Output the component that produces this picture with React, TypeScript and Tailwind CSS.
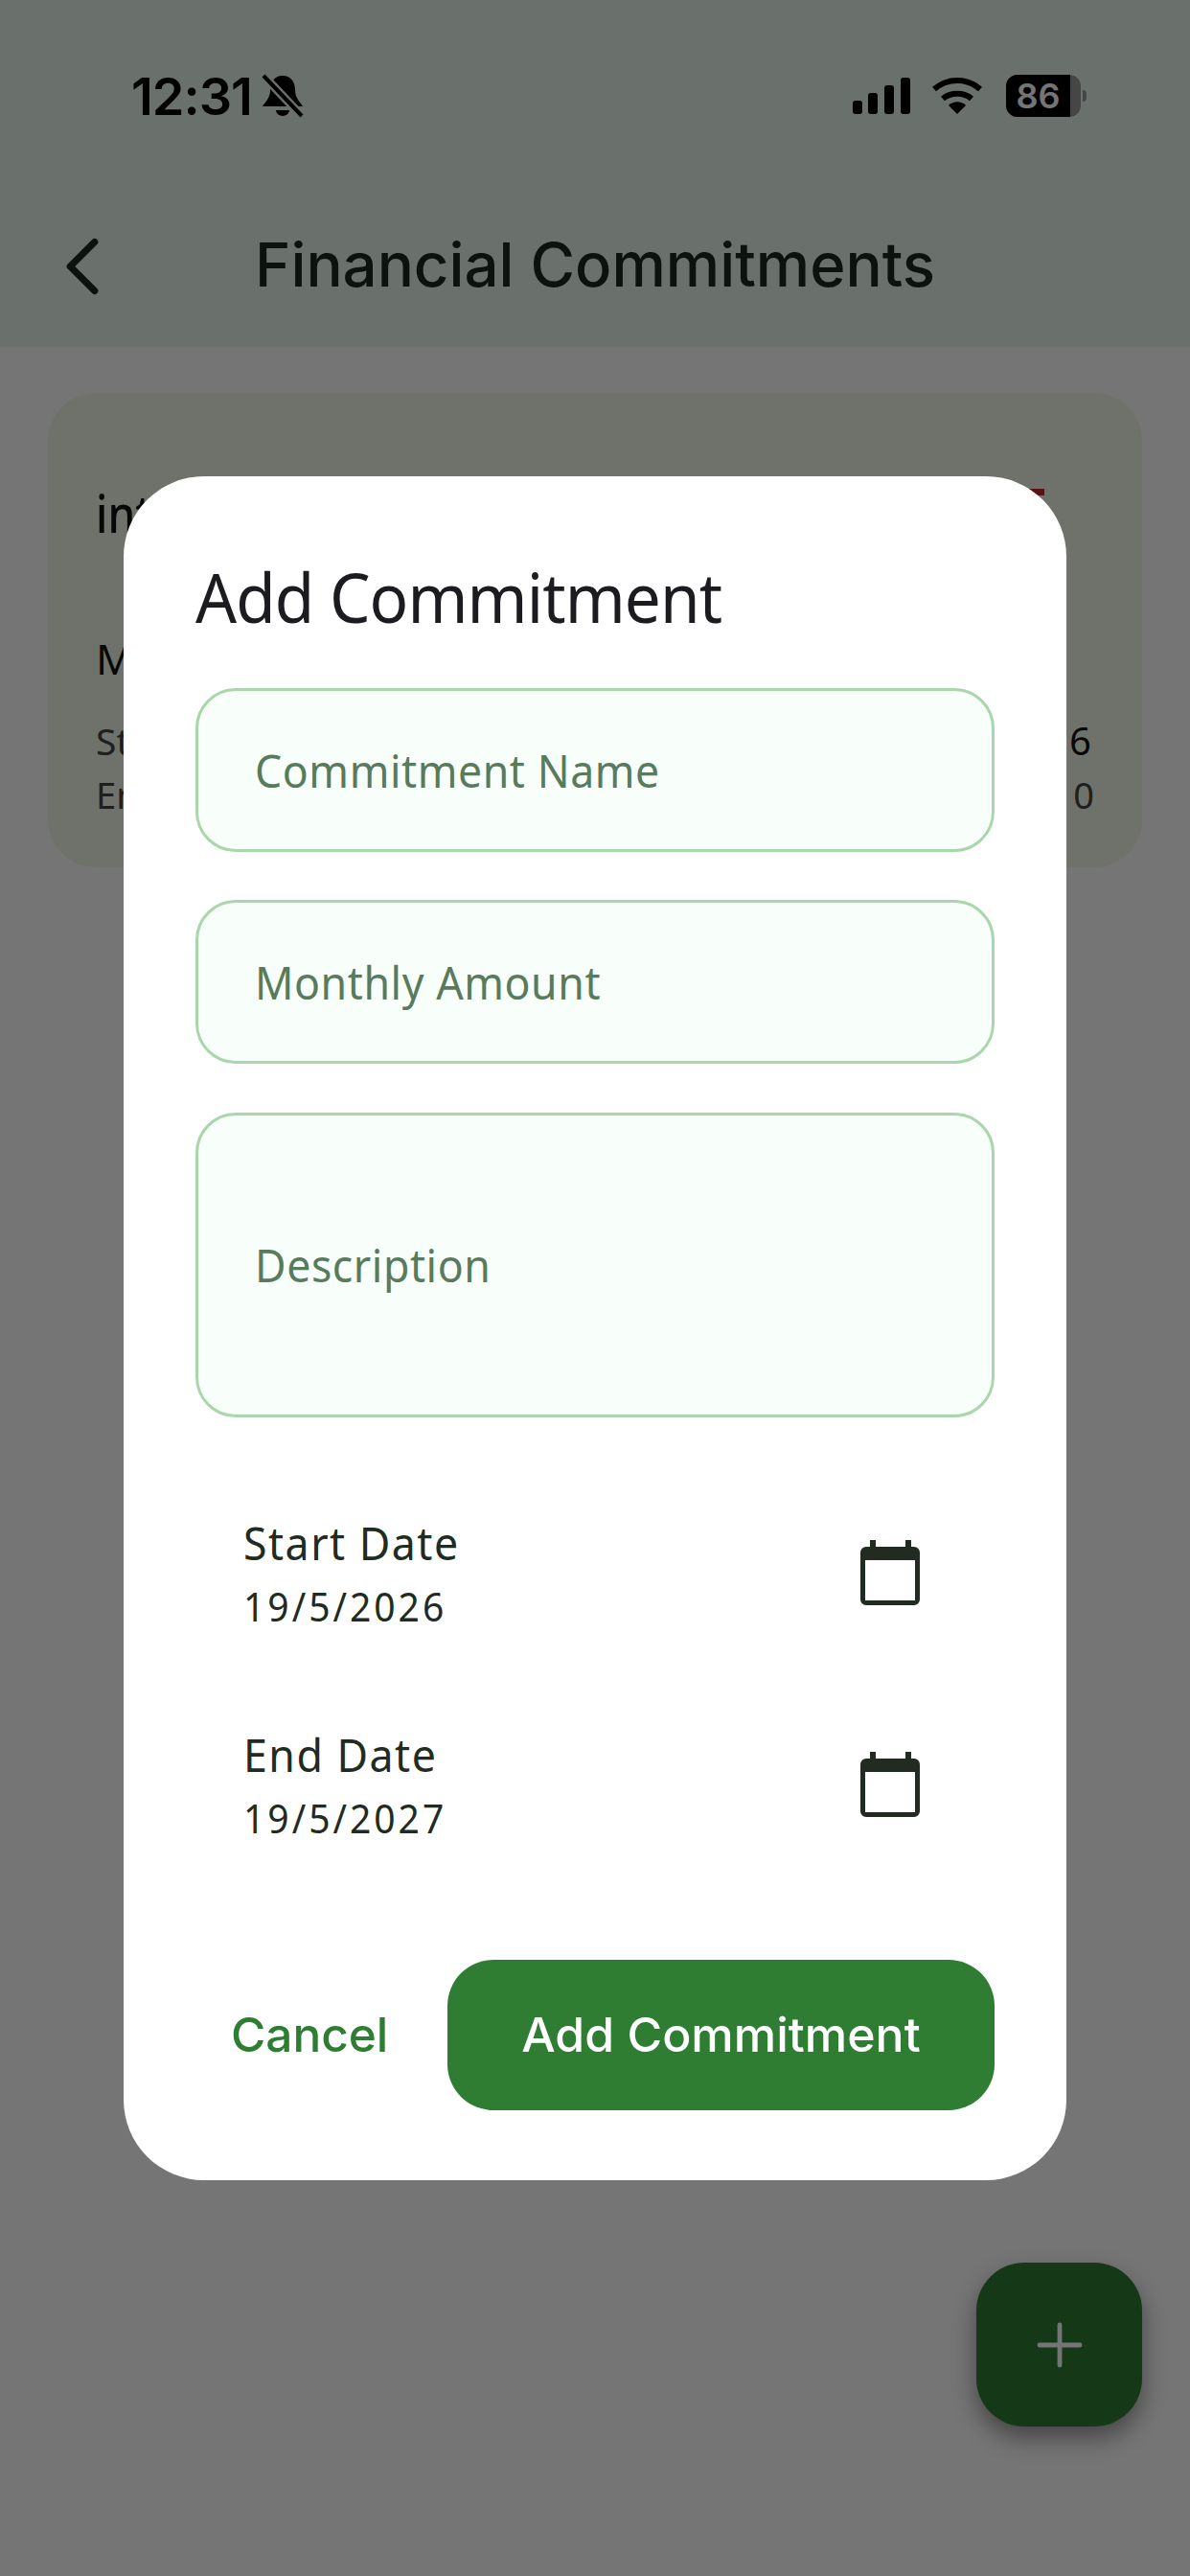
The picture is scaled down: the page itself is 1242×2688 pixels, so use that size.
import { ChevronLeft, Plus } from 'lucide-react'

function CalendarIcon() {
  return (
    <svg width="62" height="68" viewBox="0 0 62 68" className="text-[#212b22]">
      <rect x="10" y="0" width="6" height="10" fill="currentColor" />
      <rect x="47" y="0" width="6" height="10" fill="currentColor" />
      <path
        fillRule="evenodd"
        fill="currentColor"
        d="M6 7h50a6 6 0 0 1 6 6v49a6 6 0 0 1-6 6H6a6 6 0 0 1-6-6V13a6 6 0 0 1 6-6ZM5 21v42h52V21Z"
      />
    </svg>
  )
}

function Field({ label, className }: { label: string; className: string }) {
  return (
    <div className={`flex items-center rounded-[42px] border-[3px] border-[#a9d6ab] bg-[#f8fef9] pl-[59px] ${className}`}>
      <span className="origin-left scale-x-[0.93] font-['Noto_Sans',sans-serif] text-[48px] tracking-[0.6px] text-[#587a5d]">{label}</span>
    </div>
  )
}

function DateRow({ label, date }: { label: string; date: string }) {
  return (
    <div className="flex h-[150px] items-center justify-between pl-[50px] pr-[78px]">
      <div className="flex flex-col font-['Noto_Sans',sans-serif] text-[#212b22]">
        <span className="origin-left scale-x-[0.93] text-[48px] leading-[70px] tracking-[1.6px]">{label}</span>
        <span className="origin-left scale-x-[0.93] text-[42px] leading-[62px] tracking-[3.2px]">{date}</span>
      </div>
      <CalendarIcon />
    </div>
  )
}

export default function App() {
  return (
    <div className="relative h-[2688px] w-[1242px] overflow-hidden bg-[#fefefe] font-['Inter',sans-serif]">
      <header className="flex h-[362px] flex-col bg-[#e8f5e9]">
        <div className="flex h-[200px] items-center justify-between pl-[137px] pr-[108px]">
          <div className="flex items-center gap-[9px]">
            <span className="text-[54px] font-semibold tracking-[-1px] text-black">12:31</span>
            <svg width="46" height="48" viewBox="0 0 46 48" fill="none">
              <path d="M23 3c-9 0-13 7-13 15 0 9-6 13-8 17h42c-2-4-8-8-8-17 0-8-4-15-13-15Z" fill="#000" />
              <path d="M16 39a7 6 0 0 0 14 0Z" fill="#000" />
              <path d="M3 3l40 42" stroke="#e8f5e9" strokeWidth="9" />
              <path d="M3 3l40 42" stroke="#000" strokeWidth="4" />
            </svg>
          </div>
          <div className="flex items-center gap-[24px]">
            <svg width="60" height="38" viewBox="0 0 60 38" fill="#000">
              <rect x="0" y="24" width="10" height="14" rx="3" />
              <rect x="16" y="16" width="10" height="22" rx="3" />
              <rect x="33" y="8" width="10" height="30" rx="3" />
              <rect x="50" y="0" width="10" height="38" rx="3" />
            </svg>
            <svg width="54" height="40" viewBox="0 0 54 40" fill="none" className="-ml-[2px]">
              <path d="M3 13c14-12 34-12 48 0" stroke="#000" strokeWidth="6" />
              <path d="M12 23c8-7 22-7 30 0" stroke="#000" strokeWidth="6" />
              <path d="M18 30c5-5 13-5 18 0l-9 9Z" fill="#000" />
            </svg>
            <div className="flex items-center">
              <div className="flex h-[44px] w-[78px] items-center overflow-hidden rounded-[12px] bg-[#9a9a9a]">
                <div className="flex h-full w-[67px] items-center justify-center bg-black text-[36px] font-semibold text-white">86</div>
              </div>
              <div className="ml-[2px] h-[12px] w-[4px] rounded-r-full bg-[#9a9a9a]" />
            </div>
          </div>
        </div>
        <div className="relative flex h-[162px] items-start justify-center pt-[38px]">
          <ChevronLeft className="absolute left-[35px] top-[27px] text-[#1b2a1f]" size={102} strokeWidth={1.7} />
          <h1 className="text-[63.5px] font-medium leading-[76px] text-[#1b2a1f]">Financial Commitments</h1>
        </div>
      </header>

      <main className="px-[50px] pt-[48px]">
        <div className="relative h-[495px] rounded-[50px] bg-[#f1f8e9] px-[50px] font-['Noto_Sans',sans-serif]">
          <svg width="40" height="7" viewBox="0 0 40 7" fill="#c62828" className="absolute right-[102px] top-[100px]">
            <rect width="40" height="7" />
          </svg>
          <div className="flex pt-[88px]">
            <span className="origin-left scale-x-[0.85] text-[54px] font-medium leading-[74px] text-[#111]">int</span>
          </div>
          <div className="mt-[87px] text-[44px] leading-[56px] text-[#111]">M</div>
          <div className="mt-[30px] flex items-center justify-between text-[39px] leading-[56px] text-[#444]">
            <span>St</span>
            <span className="text-[40px] tracking-[3px] text-[#111]">26</span>
          </div>
          <div className="flex items-center justify-between text-[38px] leading-[56px] text-[#444]">
            <span>En</span>
            <span>10</span>
          </div>
        </div>
      </main>

      <button className="absolute left-[1019px] top-[2361px] flex h-[171px] w-[173px] items-center justify-center rounded-[50px] bg-[#2e7d32] shadow-[0_12px_24px_rgba(0,0,0,0.4)]">
        <Plus className="text-white" size={72} strokeWidth={1.6} />
      </button>

      {/* barrier + dialog */}
      <div className="absolute inset-0 bg-black/54" />

      <div className="absolute left-[129px] top-[497px] flex h-[1778px] w-[984px] flex-col rounded-[84px] bg-white px-[75px] pt-[75px]">
        <h2 className="origin-left scale-x-[0.937] font-['Noto_Sans',sans-serif] text-[72px] leading-[100px] tracking-[-1px] text-[#1c1c20]">Add Commitment</h2>
        <Field label="Commitment Name" className="mt-[46px] h-[171px]" />
        <Field label="Monthly Amount" className="mt-[50px] h-[171px]" />
        <Field label="Description" className="mt-[51px] h-[318px]" />
        <div className="mt-[87px]">
          <DateRow label="Start Date" date="19/5/2026" />
          <div className="mt-[71px]">
            <DateRow label="End Date" date="19/5/2027" />
          </div>
        </div>
        <div className="mb-[73px] mt-auto flex items-center justify-between">
          <span className="ml-[37px] text-[49.5px] font-[550] text-[#2e7d32]">Cancel</span>
          <button className="flex h-[157px] w-[571px] items-center justify-center rounded-[48px] bg-[#2e7d32] text-[50px] font-[550] text-white">Add Commitment</button>
        </div>
      </div>
    </div>
  )
}
